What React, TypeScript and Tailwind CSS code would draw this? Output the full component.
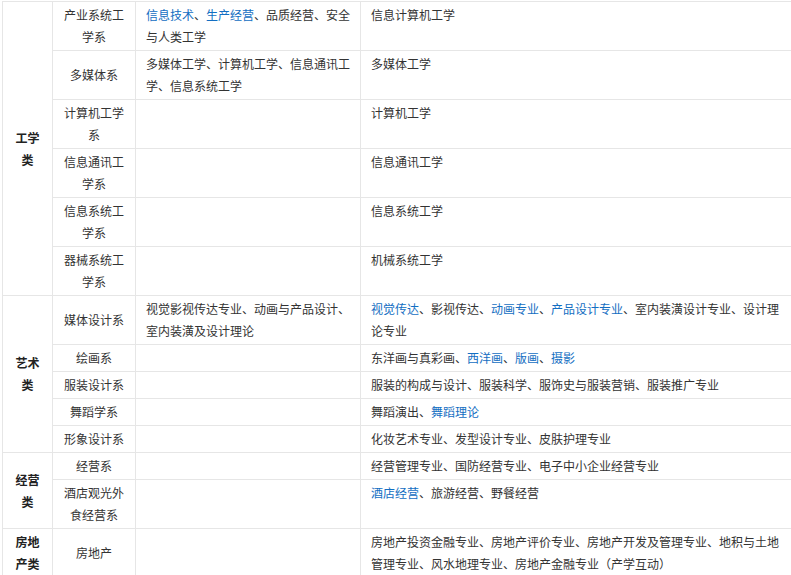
import React from "react";

type Part = string | { link: string };

const L = (s: string): Part => ({ link: s });

function Rich({ parts }: { parts: Part[] }) {
  return (
    <>
      {parts.map((p, i) =>
        typeof p === "string" ? (
          <span key={i}>{p}</span>
        ) : (
          <span key={i} className="text-[#136ec2]">
            {p.link}
          </span>
        )
      )}
    </>
  );
}

type Row = {
  cat?: { label: string; span: number };
  dept: string;
  courses: Part[];
  majors: Part[];
};

const rows: Row[] = [
  {
    cat: { label: "工学类", span: 6 },
    dept: "产业系统工学系",
    courses: [L("信息技术"), "、", L("生产经营"), "、品质经营、安全与人类工学"],
    majors: ["信息计算机工学"],
  },
  {
    dept: "多媒体系",
    courses: ["多媒体工学、计算机工学、信息通讯工学、信息系统工学"],
    majors: ["多媒体工学"],
  },
  { dept: "计算机工学系", courses: [], majors: ["计算机工学"] },
  { dept: "信息通讯工学系", courses: [], majors: ["信息通讯工学"] },
  { dept: "信息系统工学系", courses: [], majors: ["信息系统工学"] },
  { dept: "器械系统工学系", courses: [], majors: ["机械系统工学"] },
  {
    cat: { label: "艺术类", span: 5 },
    dept: "媒体设计系",
    courses: ["视觉影视传达专业、动画与产品设计、室内装潢及设计理论"],
    majors: [
      L("视觉传达"),
      "、影视传达、",
      L("动画专业"),
      "、",
      L("产品设计专业"),
      "、室内装潢设计专业、设计理论专业",
    ],
  },
  {
    dept: "绘画系",
    courses: [],
    majors: ["东洋画与真彩画、", L("西洋画"), "、", L("版画"), "、", L("摄影")],
  },
  {
    dept: "服装设计系",
    courses: [],
    majors: ["服装的构成与设计、服装科学、服饰史与服装营销、服装推广专业"],
  },
  { dept: "舞蹈学系", courses: [], majors: ["舞蹈演出、", L("舞蹈理论")] },
  {
    dept: "形象设计系",
    courses: [],
    majors: ["化妆艺术专业、发型设计专业、皮肤护理专业"],
  },
  {
    cat: { label: "经营类", span: 2 },
    dept: "经营系",
    courses: [],
    majors: ["经营管理专业、国防经营专业、电子中小企业经营专业"],
  },
  {
    dept: "酒店观光外食经营系",
    courses: [],
    majors: [L("酒店经营"), "、旅游经营、野餐经营"],
  },
  {
    cat: { label: "房地产类", span: 1 },
    dept: "房地产",
    courses: [],
    majors: [
      "房地产投资金融专业、房地产评价专业、房地产开发及管理专业、地积与土地管理专业、风水地理专业、房地产金融专业（产学互动）",
    ],
  },
];

export default function App() {
  return (
    <div
      className="w-[791px] h-[575px] overflow-hidden bg-white text-[12px] leading-[22px] text-[#333]"
      style={{ fontFamily: '"Noto Sans CJK SC", "Noto Sans", sans-serif' }}
    >
      <table className="ml-[2px] mt-[1px] w-[790px] table-fixed border-collapse">
        <colgroup>
          <col className="w-[50px]" />
          <col className="w-[83px]" />
          <col className="w-[225px]" />
          <col className="w-[432px]" />
        </colgroup>
        <tbody>
          {rows.map((r, i) => (
            <tr key={i}>
              {r.cat && (
                <td
                  rowSpan={r.cat.span}
                  className="border border-[#e6e6e6] px-[8px] py-[2px] text-center align-middle font-bold text-[#222]"
                >
                  {r.cat.label}
                </td>
              )}
              <td className="border border-[#e6e6e6] px-[8px] py-[2px] text-center align-middle">
                {r.dept}
              </td>
              <td className="border border-[#e6e6e6] pl-[10px] pr-[8px] py-[2px] align-top">
                <Rich parts={r.courses} />
              </td>
              <td className="border border-[#e6e6e6] pl-[10px] pr-[8px] py-[2px] align-top">
                <Rich parts={r.majors} />
              </td>
            </tr>
          ))}
        </tbody>
      </table>
    </div>
  );
}
